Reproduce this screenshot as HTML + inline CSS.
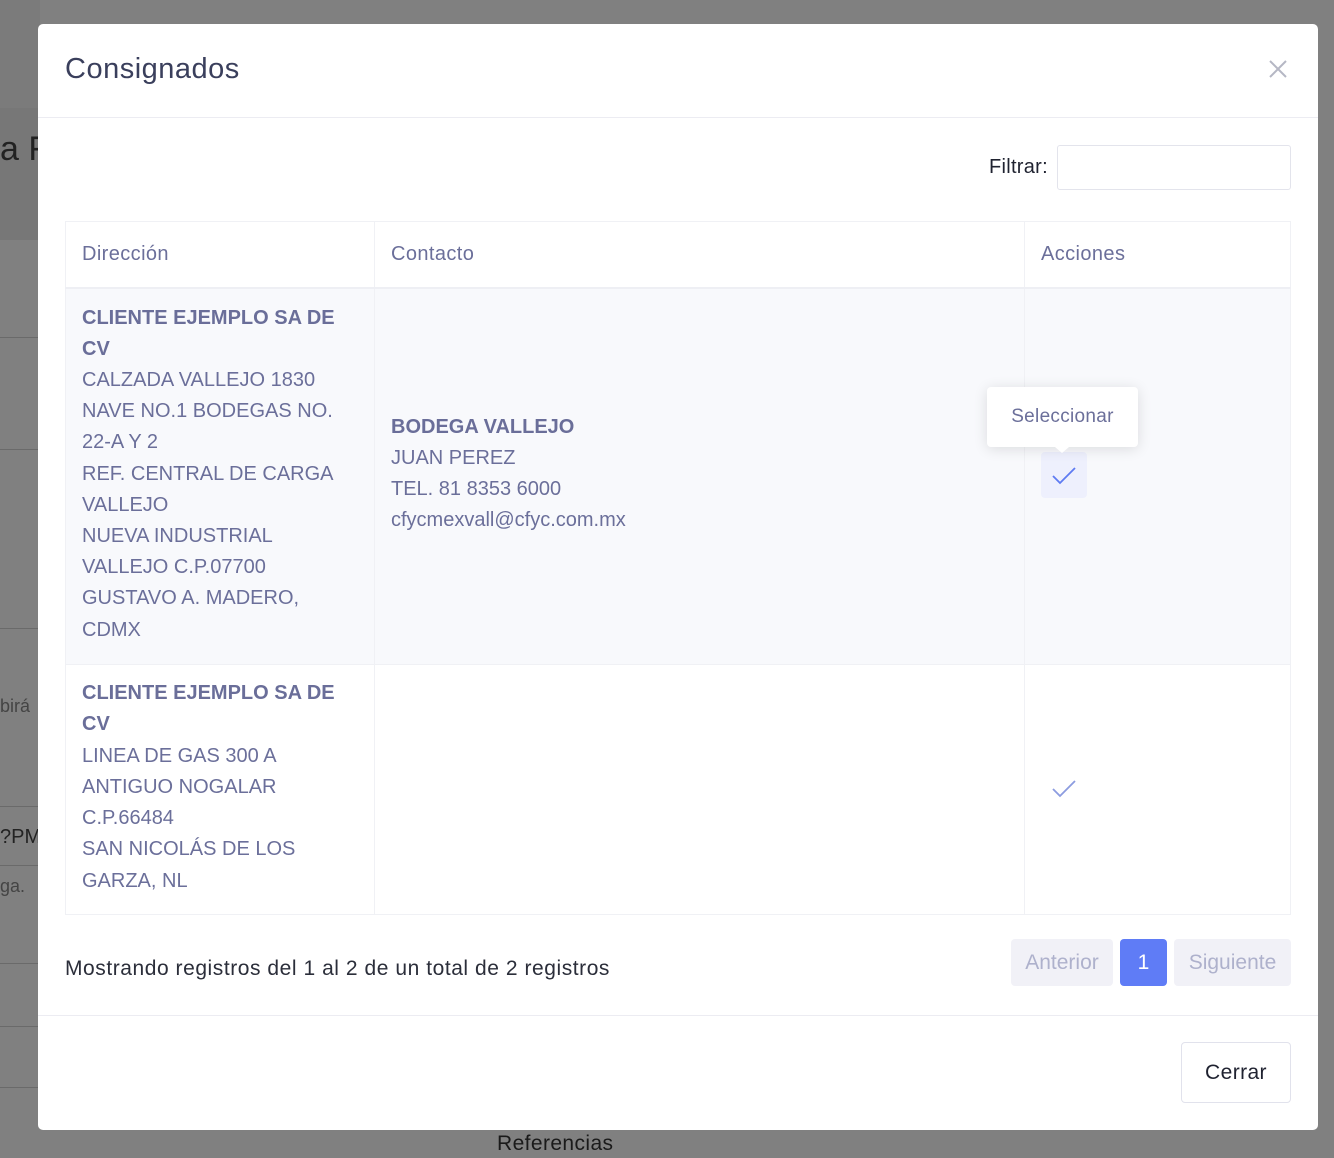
<!DOCTYPE html>
<html><head><meta charset="utf-8"><style>
*{box-sizing:border-box;margin:0;padding:0}
body{width:1334px;height:1158px;overflow:hidden;background:#808080;font-family:"Liberation Sans",sans-serif;position:relative}
.modal{position:absolute;left:38px;top:24px;width:1280px;height:1106px;background:#fff;border-radius:5px}
.hdr{height:94px;border-bottom:1px solid #ececf2;position:relative}
.hdr h1{position:absolute;left:27px;top:29px;font-size:29px;font-weight:normal;color:#3a3f5c;letter-spacing:0.5px}
.x{position:absolute;right:30px;top:35px}
.filt{position:absolute;top:121px;right:27px;display:flex;align-items:center}
.filt span{font-size:20px;color:#1f2230;margin-right:9px;letter-spacing:0.3px}
.filt div{width:234px;height:45px;border:1px solid #e3e4ec;border-radius:3px}
table{position:absolute;left:27px;top:197px;width:1226px;border-collapse:collapse;font-size:20px;color:#6b6f9a}
td,th{border:1px solid #f0f1f5;vertical-align:middle;text-align:left;padding:0 16px;line-height:31.2px;font-weight:normal}
td{padding-bottom:4px}
th{height:66px;color:#6b6f9a;border-bottom:2px solid #eeeff4;letter-spacing:0.4px}
tr.a td{background:#f8f9fc}
b{font-weight:bold;color:#6a6e99}
.foot{position:absolute;left:0;right:0;top:991px;border-top:1px solid #ececf2}
.info{position:absolute;left:27px;top:933px;font-size:21px;color:#2b2e3a;letter-spacing:0.55px}
.pg{position:absolute;top:915px;height:47px;border-radius:4px;font-size:21px;display:flex;align-items:center;justify-content:center}
.btn{position:absolute;right:27px;top:1018px;width:110px;height:61px;border:1px solid #e1e2ec;border-radius:4px;font-size:21px;color:#1f2230;display:flex;align-items:center;justify-content:center;letter-spacing:0.4px}
.chk{display:inline-flex;width:46px;height:46px;border-radius:4px;align-items:center;justify-content:center}
.tip{position:absolute;left:949px;top:363px;width:151px;height:60px;background:#fff;border-radius:4px;box-shadow:0 2px 14px rgba(0,0,0,.12);font-size:19px;color:#6b6f9a;display:flex;align-items:center;justify-content:center;letter-spacing:0.3px}
.tip:after{content:"";position:absolute;left:68px;bottom:-6px;border:7px solid transparent;border-top:6px solid #fff;border-bottom:0}
</style></head><body>
<div style="position:absolute;left:0;top:0;width:40px;height:108px;background:#7b7b7b"></div>
<div style="position:absolute;left:0;top:108px;width:40px;height:132px;background:#777"></div>
<div style="position:absolute;left:0;top:130px;font-size:34px;color:#222">a F</div>
<div style="position:absolute;left:0;top:337px;width:40px;height:1px;background:#6a6a6a"></div>
<div style="position:absolute;left:0;top:449px;width:40px;height:1px;background:#6a6a6a"></div>
<div style="position:absolute;left:0;top:628px;width:40px;height:1px;background:#6a6a6a"></div>
<div style="position:absolute;left:0;top:696px;font-size:18px;color:#444">birá</div>
<div style="position:absolute;left:0;top:806px;width:40px;height:1px;background:#6a6a6a"></div>
<div style="position:absolute;left:0;top:826px;font-size:20px;color:#222">?PM</div>
<div style="position:absolute;left:0;top:865px;width:40px;height:1px;background:#6a6a6a"></div>
<div style="position:absolute;left:0;top:876px;font-size:18px;color:#444">ga.</div>
<div style="position:absolute;left:0;top:963px;width:40px;height:1px;background:#6a6a6a"></div>
<div style="position:absolute;left:0;top:1026px;width:40px;height:1px;background:#6a6a6a"></div>
<div style="position:absolute;left:0;top:1087px;width:40px;height:1px;background:#6a6a6a"></div>
<div style="position:absolute;left:497px;top:1132px;font-size:21px;color:#1a1a1a;letter-spacing:0.4px">Referencias</div>
<div class="modal">
<div class="hdr"><h1>Consignados</h1>
<svg class="x" width="20" height="20" viewBox="0 0 20 20"><path d="M2 2L18 18M18 2L2 18" stroke="#b5b7c4" stroke-width="2"/></svg></div>
<div class="filt"><span>Filtrar:</span><div></div></div>
<table>
<tr><th style="width:309px">Dirección</th><th style="width:650px">Contacto</th><th>Acciones</th></tr>
<tr class="a"><td style="height:377px"><b>CLIENTE EJEMPLO SA DE CV</b><br>CALZADA VALLEJO 1830 NAVE NO.1 BODEGAS NO. 22-A Y 2<br>REF. CENTRAL DE CARGA VALLEJO<br>NUEVA INDUSTRIAL VALLEJO C.P.07700<br>GUSTAVO A. MADERO, CDMX</td>
<td><b>BODEGA VALLEJO</b><br>JUAN PEREZ<br>TEL. 81 8353 6000<br>cfycmexvall@cfyc.com.mx</td>
<td><span class="chk" style="background:#eef0fd;margin-top:2px"><svg width="26" height="20" viewBox="0 0 26 20"><path d="M2 11L9 18L24 3" fill="none" stroke="#5e7bf2" stroke-width="1.8"/></svg></span></td></tr>
<tr><td style="height:250px"><b>CLIENTE EJEMPLO SA DE CV</b><br>LINEA DE GAS 300 A ANTIGUO NOGALAR C.P.66484<br>SAN NICOLÁS DE LOS GARZA, NL</td><td></td>
<td><span class="chk"><svg width="26" height="20" viewBox="0 0 26 20"><path d="M2 11L9 18L24 3" fill="none" stroke="#8c9ce0" stroke-width="1.8"/></svg></span></td></tr>
</table>
<div class="tip">Seleccionar</div>
<div class="info">Mostrando registros del 1 al 2 de un total de 2 registros</div>
<div class="pg" style="left:973px;width:102px;background:#f1f1f7;color:#aeb1cc">Anterior</div>
<div class="pg" style="left:1082px;width:47px;background:#5f7cf6;color:#fff">1</div>
<div class="pg" style="left:1136px;width:117px;background:#f1f1f7;color:#aeb1cc">Siguiente</div>
<div class="foot"></div>
<div class="btn">Cerrar</div>
</div>
</body></html>
